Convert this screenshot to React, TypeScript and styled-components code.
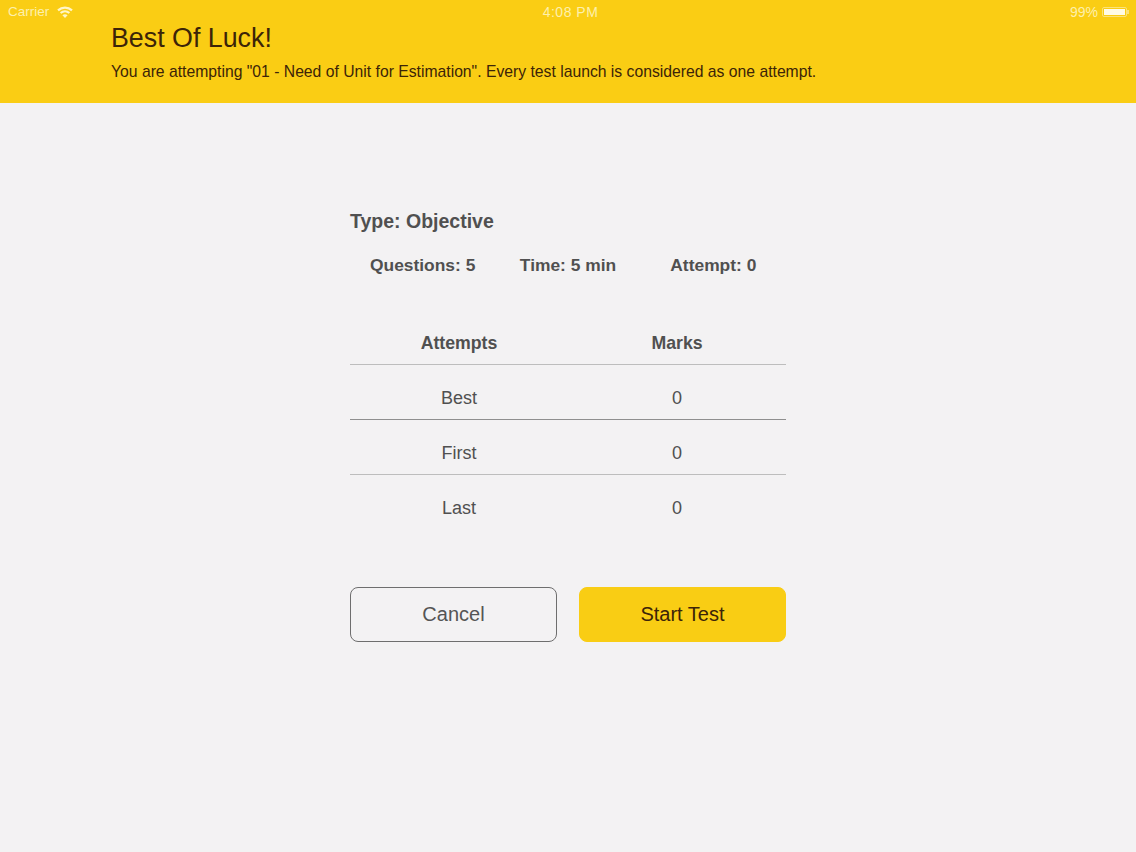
import styled, { createGlobalStyle } from 'styled-components'

const GlobalStyle = createGlobalStyle`
	html, body {
		margin: 0;
		padding: 0;
		background: #f3f2f3;
	}
	body {
		font-family: 'Liberation Sans', Arial, sans-serif;
	}
`

const Page = styled.div`
	width: 1136px;
	height: 852px;
	overflow: hidden;
	background: #f3f2f3;
`

const Banner = styled.header`
	height: 103px;
	box-sizing: border-box;
	background: #facd14;
	display: flex;
	flex-direction: column;
`

const StatusBar = styled.div`
	height: 23px;
	padding: 0 6px 0 8px;
	display: grid;
	grid-template-columns: 1fr auto 1fr;
	align-items: center;
	font-size: 13.5px;
	color: #fdf0ac;
`

const StatusLeft = styled.div`
	display: flex;
	align-items: center;
	gap: 8px;
`

const Clock = styled.span`
	font-size: 14px;
	letter-spacing: 0.5px;
	padding-left: 3px;
`

const StatusRight = styled.div`
	display: flex;
	align-items: center;
	justify-content: flex-end;
	gap: 4px;
	font-size: 14px;
`

const Battery = styled.span`
	width: 25px;
	height: 10px;
	margin-right: 3px;
	box-sizing: border-box;
	border: 1px solid #fbe27a;
	border-radius: 2px;
	padding: 1px;
	display: block;
	position: relative;

	&::before {
		content: '';
		display: block;
		height: 100%;
		background: #fffbe6;
	}

	&::after {
		content: '';
		position: absolute;
		right: -3px;
		top: 2px;
		width: 2px;
		height: 4px;
		background: #fbe27a;
	}
`

const BannerText = styled.div`
	padding-left: 111px;
	color: #3c2408;
`

const Title = styled.h1`
	margin: 0;
	font-size: 26.8px;
	line-height: 31px;
	font-weight: 400;
`

const Subtitle = styled.p`
	margin: 9px 0 0;
	font-size: 15.72px;
	line-height: 18px;
	white-space: nowrap;
`

const Content = styled.main`
	width: 436px;
	margin: 0 auto;
	padding-top: 105px;
	color: #505050;
`

const TypeLine = styled.h2`
	margin: 0;
	font-size: 19.5px;
	line-height: 26px;
	font-weight: 700;
`

const Stats = styled.div`
	display: grid;
	grid-template-columns: repeat(3, 1fr);
	margin-top: 20px;
`

const Stat = styled.span`
	font-size: 17.4px;
	line-height: 22px;
	font-weight: 700;
	text-align: center;
	white-space: nowrap;
`

const Table = styled.div`
	margin-top: 56px;
`

const Row = styled.div<{ $header?: boolean; $dark?: boolean; $last?: boolean }>`
	display: grid;
	grid-template-columns: 218px 218px;
	align-items: center;
	height: ${(props) => (props.$header ? '33px' : '55px')};
	box-sizing: border-box;
	padding: ${(props) => (props.$header ? '0 0 10px' : '11px 0 0')};
	border-bottom: ${(props) =>
		props.$last ? 'none' : `1px solid ${props.$dark ? '#8f8f8f' : '#bdbdbd'}`};
`

const Cell = styled.span<{ $header?: boolean }>`
	text-align: center;
	font-size: ${(props) => (props.$header ? '17.7px' : '18px')};
	line-height: 22px;
	font-weight: ${(props) => (props.$header ? 700 : 400)};
`

const Actions = styled.div`
	display: grid;
	grid-template-columns: 207px 207px;
	justify-content: space-between;
	margin-top: 57px;
`

const Button = styled.button<{ $primary?: boolean }>`
	height: 55px;
	box-sizing: border-box;
	border-radius: 8px;
	font-family: inherit;
	font-size: 20px;
	padding: 0;
	border: 1px solid ${(props) => (props.$primary ? '#f9cd14' : '#6e6e6e')};
	background: ${(props) => (props.$primary ? '#f9cd14' : 'transparent')};
	color: ${(props) => (props.$primary ? '#3c2408' : '#555555')};
`

const rows = [
	{ name: 'Best', marks: 0, dark: true },
	{ name: 'First', marks: 0 },
	{ name: 'Last', marks: 0, last: true },
]

function Wifi() {
	return (
		<svg width="16" height="12" viewBox="0 0 16 12" fill="none" stroke="#fff6c8" strokeWidth="2.2">
			<path d="M1 4.4C5 .6 11 .6 15 4.4" />
			<path d="M3.6 7c2.6-2.3 6.2-2.3 8.8 0" />
			<path d="M8 12 5.4 9.2c1.5-1.2 3.7-1.2 5.2 0z" fill="#fff6c8" stroke="none" />
		</svg>
	)
}

export default function App() {
	return (
		<Page>
			<GlobalStyle />
			<Banner>
				<StatusBar>
					<StatusLeft>
						Carrier
						<Wifi />
					</StatusLeft>
					<Clock>4:08 PM</Clock>
					<StatusRight>
						99%
						<Battery />
					</StatusRight>
				</StatusBar>
				<BannerText>
					<Title>Best Of Luck!</Title>
					<Subtitle>
						You are attempting "01 - Need of Unit for Estimation". Every test launch is
						considered as one attempt.
					</Subtitle>
				</BannerText>
			</Banner>
			<Content>
				<TypeLine>Type: Objective</TypeLine>
				<Stats>
					<Stat>Questions: 5</Stat>
					<Stat>Time: 5 min</Stat>
					<Stat>Attempt: 0</Stat>
				</Stats>
				<Table>
					<Row $header>
						<Cell $header>Attempts</Cell>
						<Cell $header>Marks</Cell>
					</Row>
					{rows.map((row) => (
						<Row key={row.name} $dark={row.dark} $last={row.last}>
							<Cell>{row.name}</Cell>
							<Cell>{row.marks}</Cell>
						</Row>
					))}
				</Table>
				<Actions>
					<Button>Cancel</Button>
					<Button $primary>Start Test</Button>
				</Actions>
			</Content>
		</Page>
	)
}
